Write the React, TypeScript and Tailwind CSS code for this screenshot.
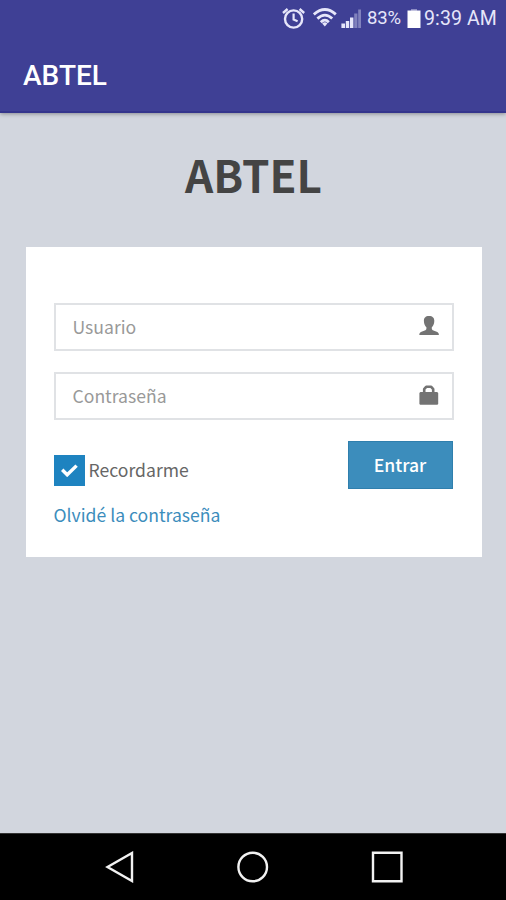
import React from 'react'

interface FieldProps {
  type: string
  placeholder: string
  children: React.ReactNode
}

const StatusBar = () => {
  return (
    <div className="flex h-[37px] items-center pl-[282px] font-['Roboto',sans-serif] text-[19.5px] leading-[37px] text-[#e6e6fa]">
      <svg className="h-6 w-6 shrink-0" viewBox="0 0 24 24" fill="none" stroke="currentColor">
        <circle cx="11.6" cy="12" r="8.6" strokeWidth="2.4" />
        <path d="M1 6 5.600 2M22.200 6 17.600 2" strokeWidth="2.4" />
        <path d="M11.600 6.600v6l4 1.600" strokeWidth="2.2" />
      </svg>
      <svg className="ml-[7px] h-6 w-6 shrink-0" viewBox="0 0 24 24" fill="none" stroke="currentColor" strokeWidth="2.8">
        <path d="M.8 7.400Q12-2.400 22.800 7.400" />
        <path d="M4.400 11.600Q12 4.600 19.200 11.600" />
        <path d="M7.800 15.200Q12 11.200 15.800 15.200" />
        <path d="M9.200 16.400Q12 14.200 14.400 16.400L11.800 19.400Z" fill="currentColor" stroke="none" />
      </svg>
      <svg className="ml-1 h-5 w-5 shrink-0" viewBox="0 0 20 20" fill="currentColor">
        <path d="M.4 14.600h3.600V19H.4zM4.800 12h3.400v7H4.800zM9 8.500h3.400V19H9z" />
        <path d="M13.200 4.500h3.200V19h-3.200zM17.200.6h2.800V19h-2.800z" opacity=".4" />
      </svg>
      <span className="ml-[6px] w-[35px] whitespace-nowrap text-[18.5px] tracking-[-0.1px]">83%</span>
      <svg className="ml-[5px] h-5 w-[14px] shrink-0" viewBox="0 0 14 20">
        <path d="M4 0h6v3H4z" fill="#8c8cc4" />
        <path d="M.5 1.500h13v17.500H.5z" fill="#fff" />
      </svg>
      <span className="ml-[3px] whitespace-nowrap tracking-[0.1px]">9:39 AM</span>
    </div>
  )
}

const Field = (props: FieldProps) => {
  return (
    <div className="flex h-12 items-center justify-between border-2 border-[#e0e2e5] pr-[13px] pl-[17px]">
      <input
        type={props.type}
        placeholder={props.placeholder}
        className="w-64 text-[17.6px] outline-none placeholder:text-[#999999]"
      />
      {props.children}
    </div>
  )
}

const NavBar = () => {
  return (
    <div className="flex h-[67px] items-center border-t border-[#333] bg-black">
      <svg className="h-8 w-full" viewBox="0 0 506 32" fill="none" stroke="#f2f2f2" strokeWidth="2.4">
        <path d="M107.5 16 132 2v28Z" />
        <circle cx="252.7" cy="16" r="14.3" />
        <path d="M373 1.8h28.5v28.5H373z" />
      </svg>
    </div>
  )
}

const App = () => {
  return (
    <div className="flex h-[900px] w-[506px] flex-col overflow-hidden bg-[#d2d6de] font-['Noto_Sans_CJK_SC',sans-serif]">
      <header className="h-[113px] shrink-0 border-b-2 border-[#34358c] bg-[#3f4095] shadow-[0_1px_4px_rgba(0,0,0,0.35)]">
        <StatusBar />
        <div className="pl-[23px] font-['Roboto',sans-serif] text-[28px] leading-[77px] font-medium text-white">
          ABTEL
        </div>
      </header>
      <main className="flex flex-1 flex-col items-center">
        <h1 className="mt-[25px] pl-px text-[44px] leading-[72px] font-bold text-[#444]">ABTEL</h1>
        <form className="mt-[37px] ml-px flex h-[310px] w-[456px] flex-col bg-white px-7 pt-14">
          <Field type="text" placeholder="Usuario">
            <svg className="mb-[2px] h-5 w-5" viewBox="0 0 20 20" fill="#737373">
              <path d="M10 0c3.600 0 5.400 2 5.300 5 0 2.900-1.200 5-2.500 6.200v1.600c0 .7.3 1.100 1 1.400l3.900 1.500c1.500.6 2.200 1.500 2.200 3.300H.3c0-1.800.7-2.700 2.200-3.300l3.900-1.500c.7-.3 1-.7 1-1.400v-1.600C6.100 10 4.900 7.900 4.900 5 4.800 2 6.400 0 10 0Z" />
            </svg>
          </Field>
          <div className="mt-[21px]">
            <Field type="password" placeholder="Contraseña">
              <svg className="mb-[2px] h-5 w-5" viewBox="0 0 20 20">
                <path d="M5.200 8V4.200L7.200 1.800h5l2 2.400V8" fill="none" stroke="#737373" strokeWidth="2.6" strokeLinejoin="round" />
                <path d="M1.400 7h16.800l1 1v11l-.8.8H1.200l-.8-.8V8Z" fill="#737373" />
              </svg>
            </Field>
          </div>
          <div className="mt-[21px] flex justify-between">
            <label className="mt-[14px] flex h-[31px] items-center text-[17.6px] leading-[31px] text-[#666]">
              <span className="flex size-[31px] items-center justify-center bg-[#1e83c0]">
                <svg className="h-[13px] w-[17px]" viewBox="0 0 17 13" fill="none" stroke="#fff" strokeWidth="3.4">
                  <path d="m1.2 5.800 5 5L15.600 1.600" />
                </svg>
              </span>
              <span className="mb-[3px] ml-1">Recordarme</span>
            </label>
            <button type="button" className="mr-px h-12 w-[105px] border border-[#2f7fad] bg-[#3c8dbc] text-[17.6px] font-medium text-white">
              Entrar
            </button>
          </div>
          <a className="mt-3 self-start text-[17.6px] leading-7 text-[#3c8dbc]">Olvidé la contraseña</a>
        </form>
      </main>
      <NavBar />
    </div>
  )
}

export default App
